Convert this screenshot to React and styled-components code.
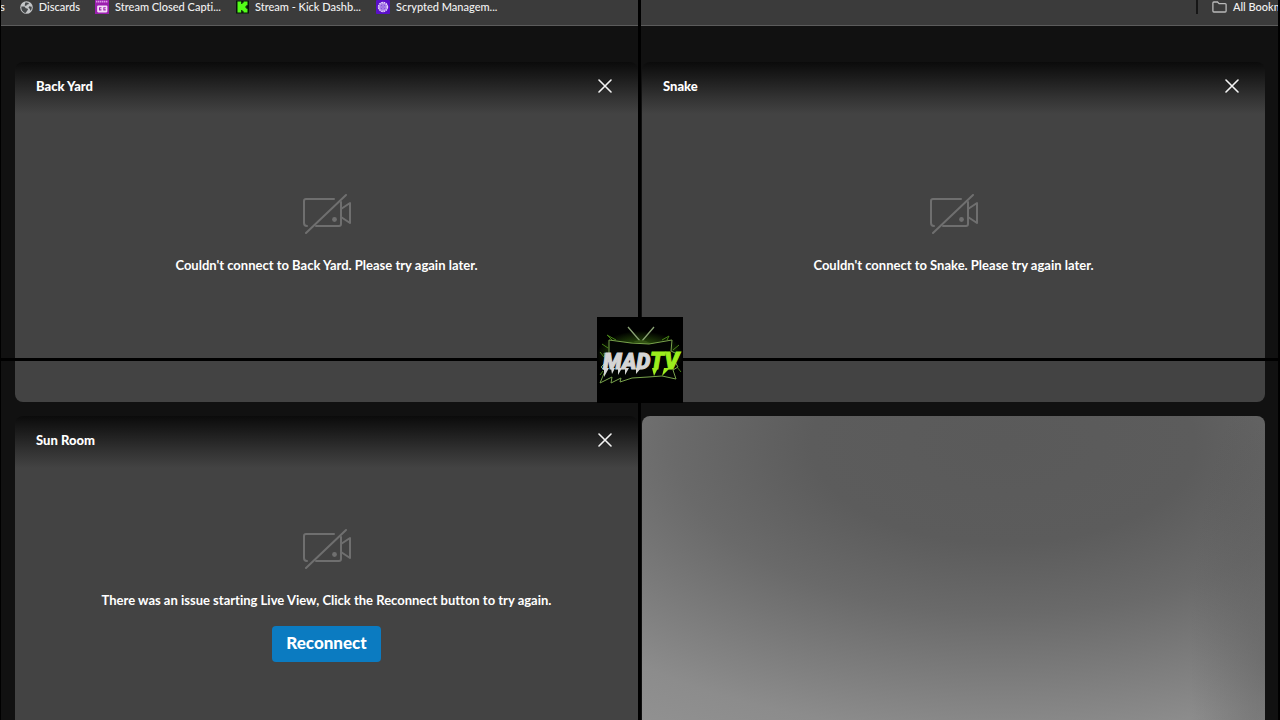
import React from "react"
import styled, { createGlobalStyle } from "styled-components"

const GlobalStyle = createGlobalStyle`
  * {
    box-sizing: border-box;
  }
  body {
    margin: 0;
    background: #111111;
    color: #ffffff;
    font-family: Lato, "Open Sans", sans-serif;
    font-variant-ligatures: no-common-ligatures;
  }
`

const Page = styled.div`
  position: relative;
  height: 100vh;
  overflow: hidden;
`

/* bookmarks bar */
const BookmarksBar = styled.nav`
  display: flex;
  align-items: flex-start;
  height: 26px;
  overflow: hidden;
  background: #3b3b3b;
  border-bottom: 1px solid #5c5c5c;
  font-size: 11px;
  font-weight: 500;
  line-height: 14px;
  white-space: nowrap;
`
const BookmarkList = styled.div`
  display: flex;
  flex: 1;
  gap: 15px;
`
const Bookmark = styled.a`
  display: flex;
  align-items: center;
  gap: 6px;
  color: #f1f1f1;
  text-decoration: none;
  svg {
    flex: none;
  }
`
const AllBookmarks = styled.div`
  display: flex;
  flex: none;
  width: 84px;
  padding-left: 14px;
  border-left: 2px solid #161616;
`

/* camera grid */
const CameraGrid = styled.main`
  display: grid;
  grid-template-columns: 1fr 1fr;
  grid-template-rows: 340px 354px;
  gap: 14px 4px;
  padding: 36px 15px 0;
`
const Card = styled.section`
  display: grid;
  border-radius: 8px;
  overflow: hidden;
  background: linear-gradient(#0b0b0b 0, #1c1c1c 16px, #333333 36px, #434343 52px);
`
const CardHeader = styled.header`
  grid-area: 1 / 1;
  align-self: start;
  display: flex;
  align-items: center;
  justify-content: space-between;
  height: 48px;
  padding: 0 24px 0 21px;
`
const CardTitle = styled.h2`
  margin: 0;
  font-size: 13px;
  font-weight: 900;
  line-height: 18px;
`
const CloseButton = styled.button`
  display: flex;
  padding: 2px;
  border: 0;
  background: none;
  color: #f4f4f4;
`
const CardBody = styled.div`
  grid-area: 1 / 1;
  align-self: center;
  display: flex;
  flex-direction: column;
  align-items: center;
  padding-top: 4px;
`
const Message = styled.p`
  margin: 22px 0 0;
  font-size: 13px;
  font-weight: 700;
  line-height: 18px;
`
const ReconnectButton = styled.button`
  height: 36px;
  margin-top: 17px;
  padding: 0 14px 2px;
  border: 0;
  border-radius: 4px;
  background: #0b7bc1;
  color: #ffffff;
  font-family: inherit;
  font-size: 17px;
  font-weight: 900;
`
const LiveFeed = styled.section`
  border-radius: 8px;
  background:
    radial-gradient(ellipse 12% 80% at 100% 70%, rgba(80, 80, 80, 0.4), transparent),
    radial-gradient(
      ellipse 110% 100% at 58% 8%,
      #5a5a5a 0,
      #5c5c5c 28%,
      #6a6a6a 48%,
      #7b7b7b 65%,
      #8c8c8c 82%,
      #939393 100%
    );
`

/* stream overlay: four black bordered panes and the channel logo */
const Overlay = styled.div`
  position: absolute;
  inset: 0;
  display: grid;
  grid-template-columns: 1fr 1fr;
  grid-template-rows: 1fr 1fr;
  pointer-events: none;
`
const Pane = styled.div`
  grid-area: ${({ $area }) => $area};
  border: 0 solid #000000;
  border-width: ${({ $widths }) => $widths};
`
const ChannelLogo = styled.svg`
  grid-area: 1 / 1 / 3 / 3;
  place-self: center;
`

const GlobeIcon = () => (
  <svg width="13" height="13" viewBox="0 0 13 13" aria-hidden="true">
    <circle cx="6.5" cy="6.5" r="6.3" fill="#c3c5c7" />
    <path
      d="M1.4 5.4l3.1.2 1.3 1.6 1.6.2.6 1.2-1.3 2-1.2 1.3C2.8 11.3 1 8.8 1.4 5.4zM5.6 1.3l3.3.7-.5 1.3-1.7.5-.5 1.3-1.5-.6.3-1.7zM9.2 5.2l2.5.6c.2 1.6-.3 3-1.2 4l-.8-2-1.2-1z"
      fill="#45484a"
    />
  </svg>
)

const CaptionIcon = () => (
  <svg width="14" height="14" viewBox="0 0 13 13" aria-hidden="true">
    <rect width="13" height="13" fill="#9b1fae" />
    <path d="M1 1.5h11" stroke="#dc9be6" strokeWidth="1.6" strokeDasharray="1.3 .5" />
    <rect x="2" y="5" width="9.5" height="6.5" rx="1" fill="#f4dcf7" />
    <path d="M6 7.2H4.2v2H6M10 7.2H8.2v2H10" fill="none" stroke="#9b1fae" />
  </svg>
)

const KickIcon = () => (
  <svg width="13" height="14" viewBox="0 0 13 13" aria-hidden="true">
    <rect width="13" height="13" fill="#07140a" />
    <path
      d="M1.5 1h3.7v2.5h1.2V2.3h1.2V1h3.9v3.7h-1.2v1.2H9.1v1.2h1.2v1.2h1.2V12H7.6v-1.2H6.4V9.5H5.2V12H1.5z"
      fill="#53fc18"
    />
  </svg>
)

const ScryptedIcon = () => (
  <svg width="14" height="14" viewBox="0 0 14 14" aria-hidden="true">
    <rect width="14" height="14" rx="1" fill="#5a0fc8" />
    <circle cx="7" cy="7" r="4.5" fill="none" stroke="#e6d8fb" strokeWidth="1.4" strokeDasharray="1.8 .55" />
    <circle cx="7" cy="7" r="3.8" fill="#d9c5f8" />
    <rect x="5" y="5" width="4" height="4" fill="none" stroke="#5a0fc8" strokeWidth=".8" />
    <circle cx="7" cy="7" r=".8" fill="#5a0fc8" />
  </svg>
)

const FolderIcon = () => (
  <svg width="15" height="12" viewBox="0 0 15 12" aria-hidden="true">
    <path
      d="M.9 10V2c0-.6.4-1 1-1h3.6l1.6 1.6h6c.6 0 1 .4 1 1V10c0 .6-.4 1-1 1H1.9c-.6 0-1-.4-1-1z"
      fill="none"
      stroke="#b9b9b9"
      strokeWidth="1.3"
    />
  </svg>
)

const CloseIcon = () => (
  <svg width="14" height="14" viewBox="0 0 14 14" aria-hidden="true">
    <path d="M1 1l12 12M13 1L1 13" stroke="currentColor" strokeWidth="1.6" strokeLinecap="round" />
  </svg>
)

const CameraOffIcon = () => (
  <svg width="50" height="40" viewBox="0 0 50 40" aria-hidden="true">
    <g fill="none" stroke="#6f6f6f" strokeWidth="2" strokeLinecap="round" strokeLinejoin="round">
      <path d="M32 5H4Q2 5 2 7v22q0 3 3 3M14 32h23q2 0 2-2V8" />
      <path d="M39 15l9-6v20l-9-6" />
      <path d="M44 1L4 39" />
    </g>
    <circle cx="32.5" cy="25.5" r="2.4" fill="#6f6f6f" />
  </svg>
)

const MadTvLogo = () => (
  <ChannelLogo width="86" height="86" viewBox="0 0 86 86" role="img" aria-label="MAD TV">
    <defs>
      <radialGradient id="glow">
        <stop offset="0.5" stopColor="#3f7a10" stopOpacity="0.6" />
        <stop offset="1" stopColor="#3f7a10" stopOpacity="0" />
      </radialGradient>
    </defs>
    <rect width="86" height="86" fill="#000000" />
    <ellipse cx="43" cy="38" rx="43" ry="24" fill="url(#glow)" />
    <path
      d="M12 23l22 3 18 1 23-4-1 11 6 3-3 6 4 7-5 3 3 9-14-3-14 1-16 1-12 4 1-4-10 5 1-6-12 6 5-12-4-4 5-5-2-9 5 2z"
      fill="#020402"
      stroke="#79a34c"
      strokeWidth="1"
      strokeLinejoin="round"
    />
    <g fill="none" stroke="#65b820" strokeWidth="1" strokeLinejoin="round" opacity=".7">
      <path d="M15 23l-5-5 9 5M65 23l7-4-2 4M11 31l-6-4M76 33l6-5" />
      <path d="M7 40l-4-5M80 50l4 5M6 54l-3 4" />
    </g>
    <path d="M43 24L31 10M45 24L57 10" stroke="#8aa374" strokeWidth="1.3" />
    <path d="M34 26q10-6 19 0z" fill="#325213" />
    <g fontFamily="Roboto, sans-serif" fontStyle="italic" fontWeight="900">
      <text x="6" y="52" fontSize="22" fill="#d5d5d5" stroke="#d5d5d5" strokeWidth="1">
        MAD
      </text>
      <text x="53" y="52" fontSize="23" fill="#9cee1d" stroke="#9cee1d" strokeWidth="1">
        TV
      </text>
    </g>
    <path
      d="M7 51h5l-5 9zM14 51h4l-3 6zM21 51h4l-4 7zM39 51h5l-5 6zM28 51h4l-4 7z"
      fill="#d5d5d5"
    />
    <path d="M55 51h6l-4 8zM67 51h6l-8 8z" fill="#9cee1d" />
  </ChannelLogo>
)

const bookmarks = [
  { label: "Discards", Icon: GlobeIcon },
  { label: "Stream Closed Capti...", Icon: CaptionIcon },
  { label: "Stream - Kick Dashb...", Icon: KickIcon },
  { label: "Scrypted Managem...", Icon: ScryptedIcon },
]

const cameras = [
  { name: "Back Yard", message: "Couldn't connect to Back Yard. Please try again later." },
  { name: "Snake", message: "Couldn't connect to Snake. Please try again later." },
  {
    name: "Sun Room",
    message: "There was an issue starting Live View, Click the Reconnect button to try again.",
    reconnect: true,
  },
]

const CameraCard = ({ name, message, reconnect }) => (
  <Card>
    <CardBody>
      <CameraOffIcon />
      <Message>{message}</Message>
      {reconnect && <ReconnectButton type="button">Reconnect</ReconnectButton>}
    </CardBody>
    <CardHeader>
      <CardTitle>{name}</CardTitle>
      <CloseButton type="button" aria-label={`Close ${name}`}>
        <CloseIcon />
      </CloseButton>
    </CardHeader>
  </Card>
)

const App = () => (
  <Page>
    <GlobalStyle />
    <BookmarksBar>
      <BookmarkList>
        <Bookmark href="#">s</Bookmark>
        {bookmarks.map(({ label, Icon }) => (
          <Bookmark href="#" key={label}>
            <Icon />
            {label}
          </Bookmark>
        ))}
      </BookmarkList>
      <AllBookmarks>
        <Bookmark href="#">
          <FolderIcon />
          All Bookmarks
        </Bookmark>
      </AllBookmarks>
    </BookmarksBar>
    <CameraGrid>
      {cameras.map(camera => (
        <CameraCard key={camera.name} {...camera} />
      ))}
      <LiveFeed aria-label="Live view" />
    </CameraGrid>
    <Overlay>
      <Pane $area="1 / 1" $widths="0 2px 2px 1px" />
      <Pane $area="1 / 2" $widths="0 2px 2px 1px" />
      <Pane $area="2 / 1" $widths="1px 2px 0 1px" />
      <Pane $area="2 / 2" $widths="1px 2px 0 1px" />
      <MadTvLogo />
    </Overlay>
  </Page>
)

export default App
